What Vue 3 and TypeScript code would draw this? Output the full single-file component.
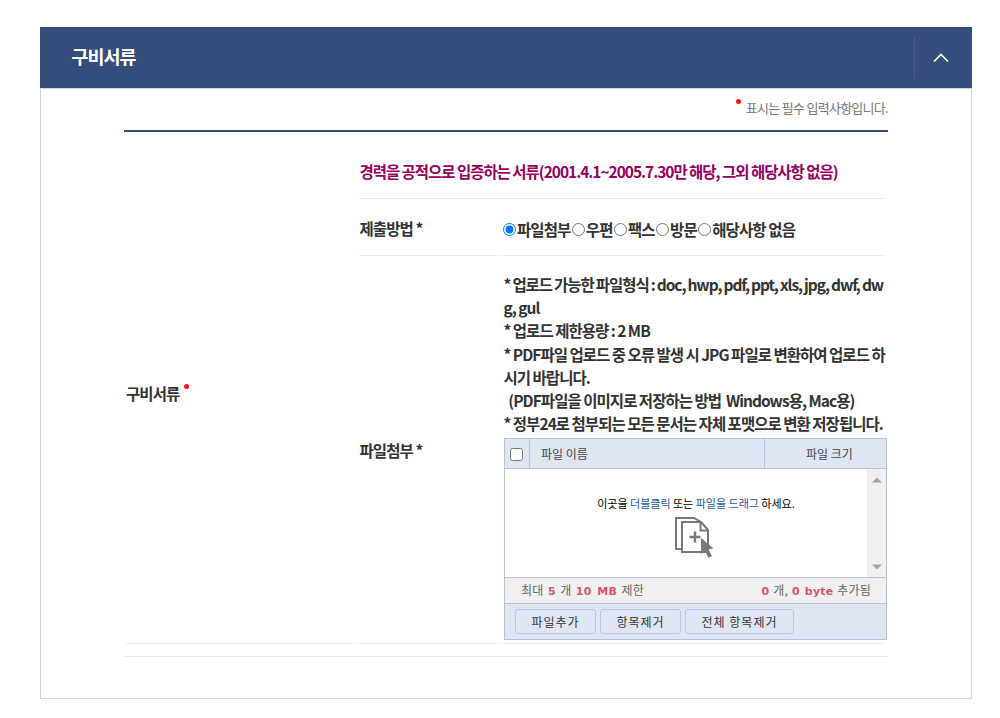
<script setup lang="ts">
import { ref } from 'vue'

const methods: string[] = ['파일첨부', '우편', '팩스', '방문', '해당사항 없음']
const selected = ref<string>(methods[0])
const open = ref<boolean>(true)
const notes: string[] = [
  '* 업로드 가능한 파일형식 : doc, hwp, pdf, ppt, xls, jpg, dwf, dw',
  'g, gul',
  '* 업로드 제한용량 : 2 MB',
  '* PDF파일 업로드 중 오류 발생 시 JPG 파일로 변환하여 업로드 하',
  '시기 바랍니다.',
  '\u00a0 (PDF파일을 이미지로 저장하는 방법\u00a0 Windows용, Mac용)',
  '* 정부24로 첨부되는 모든 문서는 자체 포맷으로 변환 저장됩니다.',
]
</script>

<template>
  <section class="panel">
    <header class="bar">
      <h2>구비서류</h2>
      <button class="toggle" type="button" @click="open = !open">
        <svg width="16" height="10" viewBox="0 0 16 10"><path d="M1 8.5 8 1.5l7 7" fill="none" stroke="#fff" stroke-width="1.7" /></svg>
      </button>
    </header>
    <div v-if="open" class="content">
      <p class="required"><i class="dot"></i><span>표시는 필수 입력사항입니다.</span></p>
      <div class="form">
        <div class="cell main-label"><span>구비서류</span><i class="dot"></i></div>
        <div class="rows">
          <div class="cell doc-title">경력을 공적으로 입증하는 서류(2001.4.1~2005.7.30만 해당, 그외 해당사항 없음)</div>
          <div class="cell name method-name">제출방법 *</div>
          <div class="cell radios">
            <label v-for="m in methods" :key="m"><input v-model="selected" type="radio" name="method" :value="m" /><span>{{ m }}</span></label>
          </div>
          <div class="cell name file-name">파일첨부 *</div>
          <div class="cell files">
            <p v-for="(line, i) in notes" :key="line" class="note" :class="'note-' + i">{{ line }}</p>
            <div class="uploader">
              <div class="up-head">
                <div class="check"><input type="checkbox" /></div>
                <div class="col-name">파일 이름</div>
                <div class="col-size">파일 크기</div>
              </div>
              <div class="drop">
                <div class="drop-inner">
                  <p>이곳을 <b>더블클릭</b> 또는 <b>파일을 드래그</b> 하세요.</p>
                  <svg width="40" height="42" viewBox="0 0 40 42">
                    <g fill="none" stroke="#77787a" stroke-width="2">
                      <path d="M8 33H2V2h18l7 4" />
                      <path d="M8 6h19l7 8v22H8z" fill="#fff" />
                      <path d="M26.5 6v8.5H34" />
                      <path d="M15.5 21h11M21 15.500v11" stroke-width="2.400" />
                    </g>
                    <path d="M27 22v16l4-3.300 3.500 7 3.500-1.800-3.600-6.600 5.100-.8z" fill="#77787a" />
                  </svg>
                </div>
                <div class="scroll">
                  <svg width="10" height="6" viewBox="0 0 10 6"><path d="M0 5.500 5 .5l5 5z" fill="#a3a3a3" /></svg>
                  <svg width="10" height="6" viewBox="0 0 10 6"><path d="M0 .5 5 5.500l5-5z" fill="#a3a3a3" /></svg>
                </div>
              </div>
              <div class="status">
                <span class="limit">최대 <b>5</b> 개 <b>10 MB</b> 제한</span>
                <span class="added"><b>0</b> 개, <b>0 byte</b> 추가됨</span>
              </div>
              <div class="actions">
                <button type="button">파일추가</button>
                <button type="button">항목제거</button>
                <button type="button" class="wide">전체 항목제거</button>
              </div>
            </div>
          </div>
        </div>
      </div>
    </div>
  </section>
</template>

<style>
body {
  background: #fff;
}
</style>

<style scoped>
* {
  box-sizing: border-box;
}
p,
h2 {
  margin: 0;
}
.panel {
  width: 932px;
  height: 672px;
  margin: 27px 0 0 40px;
  color: #333;
  font-family: 'Noto Sans CJK KR', sans-serif;
  font-size: 15.5px;
  font-weight: 700;
  line-height: 1.5;
  letter-spacing: -0.9px;
  white-space: nowrap;
}
.bar {
  display: flex;
  align-items: center;
  justify-content: space-between;
  height: 61px;
  padding-left: 31.5px;
  background: #344d7a;
  color: #fff;
}
.bar h2 {
  height: 61px;
  font-size: 18.5px;
  font-weight: 700;
  line-height: 59px;
  letter-spacing: -1px;
}
.toggle {
  display: flex;
  align-items: center;
  justify-content: center;
  width: 58px;
  height: 42px;
  padding: 0 5px 0 0;
  border: 0;
  border-left: 1px solid #485e87;
  background: none;
}
.content {
  height: 611px;
  padding: 0 83px;
  border: 1px solid #d3d3d5;
}
.required {
  display: flex;
  justify-content: flex-end;
  gap: 5px;
  height: 43px;
  padding-top: 10px;
  border-bottom: 2px solid #344d7a;
  color: #777;
  font-size: 13px;
  font-weight: 400;
  letter-spacing: -0.72px;
}
.required span {
  margin-top: -1px;
}
.dot {
  width: 5px;
  height: 5px;
  border-radius: 50%;
  background: #ff1010;
}
.form {
  display: flex;
  gap: 2px;
  height: 525px;
  padding: 0 2px;
  border-bottom: 1px solid #ebebeb;
}
.cell {
  border-bottom: 1px solid #ebebeb;
}
.main-label {
  display: flex;
  align-items: center;
  gap: 5px;
  width: 232px;
  height: 512px;
  padding-top: 13px;
}
.main-label .dot {
  margin-bottom: 16px;
}
.rows {
  display: grid;
  grid-template-columns: 142px 383px;
  grid-template-rows: 67px 57px 388px;
  column-gap: 2px;
  width: 527px;
}
.doc-title {
  grid-column: 1 / 3;
  padding: 28px 0 0 0.5px;
  color: #97005e;
  letter-spacing: -1.02px;
  word-spacing: -0.1px;
}
.name {
  padding-left: 0.5px;
}
.method-name {
  padding-top: 18px;
}
.file-name {
  padding-top: 183px;
}
.radios {
  display: flex;
  align-items: flex-start;
  padding-top: 19px;
}
.radios label {
  display: flex;
  align-items: center;
}
.radios input {
  width: 13px;
  height: 13px;
  margin: 0 1px 0 0;
}
.radios label + label {
  margin-left: 1.4px;
}
.files {
  padding: 17px 0 0 1px;
}
.note {
  height: 23.2px;
  line-height: 23.2px;
  letter-spacing: -0.94px;
  word-spacing: -0.2px;
  text-indent: -0.5px;
}
.note-0 {
  letter-spacing: -1.05px;
  word-spacing: -0.4px;
}
.uploader {
  width: 383px;
  height: 202px;
  margin-top: 3px;
  border: 1px solid #b9c3d6;
  color: #444;
  font-size: 12px;
  font-weight: 400;
  letter-spacing: 0;
}
.up-head {
  display: flex;
  height: 30px;
  border-bottom: 1px solid #b9c3d6;
  background: #dfe6f2;
  line-height: 29px;
}
.check {
  display: flex;
  align-items: center;
  justify-content: center;
  width: 25px;
  border-right: 1px solid #b9c3d6;
}
.check input {
  width: 13px;
  height: 13px;
  margin: 2px 1px 0 0;
}
.col-name {
  flex: 1;
  padding-left: 11px;
}
.col-size {
  width: 122px;
  padding-left: 41px;
  border-left: 1px solid #b9c3d6;
}
.drop {
  display: flex;
  height: 109px;
  border-bottom: 1px solid #b9c3d6;
}
.drop-inner {
  display: flex;
  flex: 1;
  flex-direction: column;
  align-items: center;
  padding: 25px 0 0 20px;
  color: #000;
  font-size: 11px;
}
.drop-inner p {
  line-height: 18px;
}
.drop-inner b {
  color: #1858a8;
  font-weight: 400;
}
.drop-inner svg {
  margin-top: 4px;
  margin-right: 4px;
}
.scroll {
  display: flex;
  flex-direction: column;
  align-items: center;
  justify-content: space-between;
  width: 19px;
  padding: 8px 0 7px;
  background: #f0f0f0;
}
.status {
  display: flex;
  justify-content: space-between;
  height: 26px;
  padding: 0 15px 0 16px;
  border-bottom: 1px solid #b9c3d6;
  background: #f0f0f0;
  color: #666;
  line-height: 24px;
}
.limit {
  letter-spacing: 0.3px;
  word-spacing: 1.3px;
}
.added {
  letter-spacing: 0.2px;
  word-spacing: 1px;
}
.status b {
  color: #d5566c;
  font-family: 'DejaVu Sans', sans-serif;
  font-size: 11px;
}
.actions {
  display: flex;
  gap: 4px;
  height: 35px;
  padding: 5px 10px;
  background: #dfe6f2;
}
.actions button {
  width: 81px;
  height: 25px;
  padding: 0;
  border: 1px solid #b9c8db;
  border-radius: 3px;
  background: #dfe6f2;
  color: #333;
  font: 400 12px/21px 'Noto Sans CJK KR', sans-serif;
  letter-spacing: 1px;
}
.actions .wide {
  width: 109px;
}
</style>
